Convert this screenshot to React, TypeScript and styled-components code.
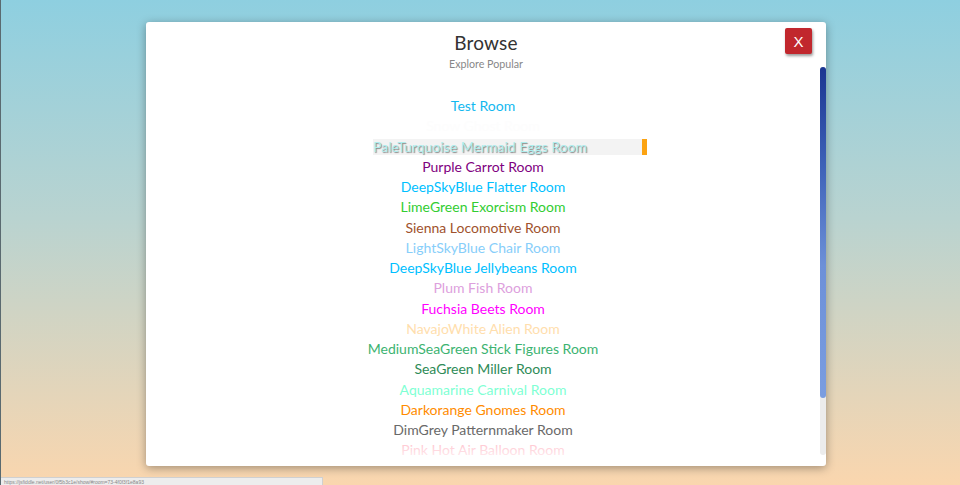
import React from "react";
import styled, { createGlobalStyle } from "styled-components";

const Global = createGlobalStyle`
  html, body { margin: 0; padding: 0; }
  body {
    height: 485px;
    overflow: hidden;
    background: linear-gradient(to bottom, #8ecfe0 0%, #b9d3d0 45%, #fad6ae 100%);
    border-left: 1px solid #5a6a70;
    box-sizing: border-box;
    font-family: "Lato", "Open Sans", sans-serif;
  }
`;

const Page = styled.div`
  height: 485px;
  padding-top: 22px;
  box-sizing: border-box;
  position: relative;
`;

const Modal = styled.div`
  position: relative;
  width: 680px;
  height: 444px;
  margin: 0 0 0 145px;
  background: #fff;
  border-radius: 3px;
  box-shadow: 0 2px 10px rgba(0, 0, 0, 0.35);
  display: flex;
  flex-direction: column;
  overflow: hidden;
`;

const Header = styled.div`
  padding-top: 10px;
  height: 35px;
  text-align: center;
  flex: none;
`;

const Title = styled.h1`
  margin: 0;
  font-weight: 400;
  font-size: 19px;
  line-height: 22px;
  color: #333;
  letter-spacing: 0.2px;
`;

const Subtitle = styled.div`
  margin-top: 4px;
  font-size: 10.7px;
  line-height: 12px;
  color: #888;
`;

const Close = styled.button`
  position: absolute;
  top: 6px;
  right: 14px;
  width: 27px;
  height: 26px;
  border: none;
  border-radius: 2px;
  background: #c1272d;
  color: #fff;
  font-family: "Liberation Sans", sans-serif;
  font-size: 15px;
  padding: 0;
  box-shadow: 1px 2px 3px rgba(0, 0, 0, 0.4);
  cursor: pointer;
`;

const Body = styled.div`
  display: flex;
  height: 388px;
  flex: none;
`;

const ListArea = styled.div`
  position: relative;
  flex: 1;
  overflow: hidden;
`;

const ScrollTrack = styled.div`
  width: 6px;
  background: #ececec;
  border-radius: 3px;
  display: flex;
  flex-direction: column;
`;

const ScrollThumb = styled.div`
  height: 331px;
  border-radius: 3px;
  background: linear-gradient(to bottom, #1b3591 0%, #3e62b8 30%, #6d90d8 60%, #7a9de0 100%);
`;

const List = styled.ul`
  list-style: none;
  margin: 0;
  padding: 31px 0 40px;
  text-align: center;
`;

const Item = styled.li<{ $color: string }>`
  color: ${(p) => p.$color};
  font-size: 14px;
  line-height: 16.25px;
  margin-bottom: 4px;
  white-space: nowrap;
`;

const Active = styled.span`
  display: inline-block;
  background: #f3f3f3;
  border-right: 5px solid #fca311;
  padding-right: 55px;
  transform: translateX(27px);
  text-shadow: 1px 1px 1px rgba(0, 0, 0, 0.45);
`;

const Fade = styled.div`
  position: absolute;
  left: 0;
  right: 0;
  bottom: 0;
  height: 14px;
  background: linear-gradient(to bottom, rgba(255,255,255,0), rgba(255,255,255,0.6));
  pointer-events: none;
`;

const Status = styled.div`
  position: absolute;
  left: 0;
  bottom: 0;
  width: 322px;
  height: 8px;
  background: #ededed;
  border-top: 1px solid #d0d0d0;
  border-right: 1px solid #d0d0d0;
  font-family: "Liberation Sans", sans-serif;
  font-size: 5px;
  line-height: 8px;
  color: #888;
  padding-left: 3px;
  box-sizing: border-box;
  overflow: hidden;
  white-space: nowrap;
`;

const rooms: [string, string][] = [
  ["Test Room", "#13b8ef"],
  ["Snow Ghost Room", "#fdfdfd"],
  ["PaleTurquoise Mermaid Eggs Room", "paleturquoise"],
  ["Purple Carrot Room", "purple"],
  ["DeepSkyBlue Flatter Room", "deepskyblue"],
  ["LimeGreen Exorcism Room", "limegreen"],
  ["Sienna Locomotive Room", "sienna"],
  ["LightSkyBlue Chair Room", "lightskyblue"],
  ["DeepSkyBlue Jellybeans Room", "deepskyblue"],
  ["Plum Fish Room", "plum"],
  ["Fuchsia Beets Room", "fuchsia"],
  ["NavajoWhite Alien Room", "navajowhite"],
  ["MediumSeaGreen Stick Figures Room", "mediumseagreen"],
  ["SeaGreen Miller Room", "seagreen"],
  ["Aquamarine Carnival Room", "aquamarine"],
  ["Darkorange Gnomes Room", "darkorange"],
  ["DimGrey Patternmaker Room", "dimgrey"],
  ["Pink Hot Air Balloon Room", "pink"],
  ["Tomato Juggler Room", "tomato"],
  ["SteelBlue Kite Room", "steelblue"],
];

export default function App() {
  return (
    <Page>
      <Global />
      <Modal>
        <Header>
          <Title>Browse</Title>
          <Subtitle>Explore Popular</Subtitle>
        </Header>
        <Close>X</Close>
        <Body>
          <ListArea>
            <List>
              {rooms.map(([name, color], i) => (
                <Item key={name} $color={color}>
                  {i === 2 ? <Active>{name}</Active> : name}
                </Item>
              ))}
            </List>
            <Fade />
          </ListArea>
          <ScrollTrack>
            <ScrollThumb />
          </ScrollTrack>
        </Body>
      </Modal>
      <Status>https://jsfiddle.net/user/0f5b3c1e/show/#room=73-4f0f3f1e8a93</Status>
    </Page>
  );
}
